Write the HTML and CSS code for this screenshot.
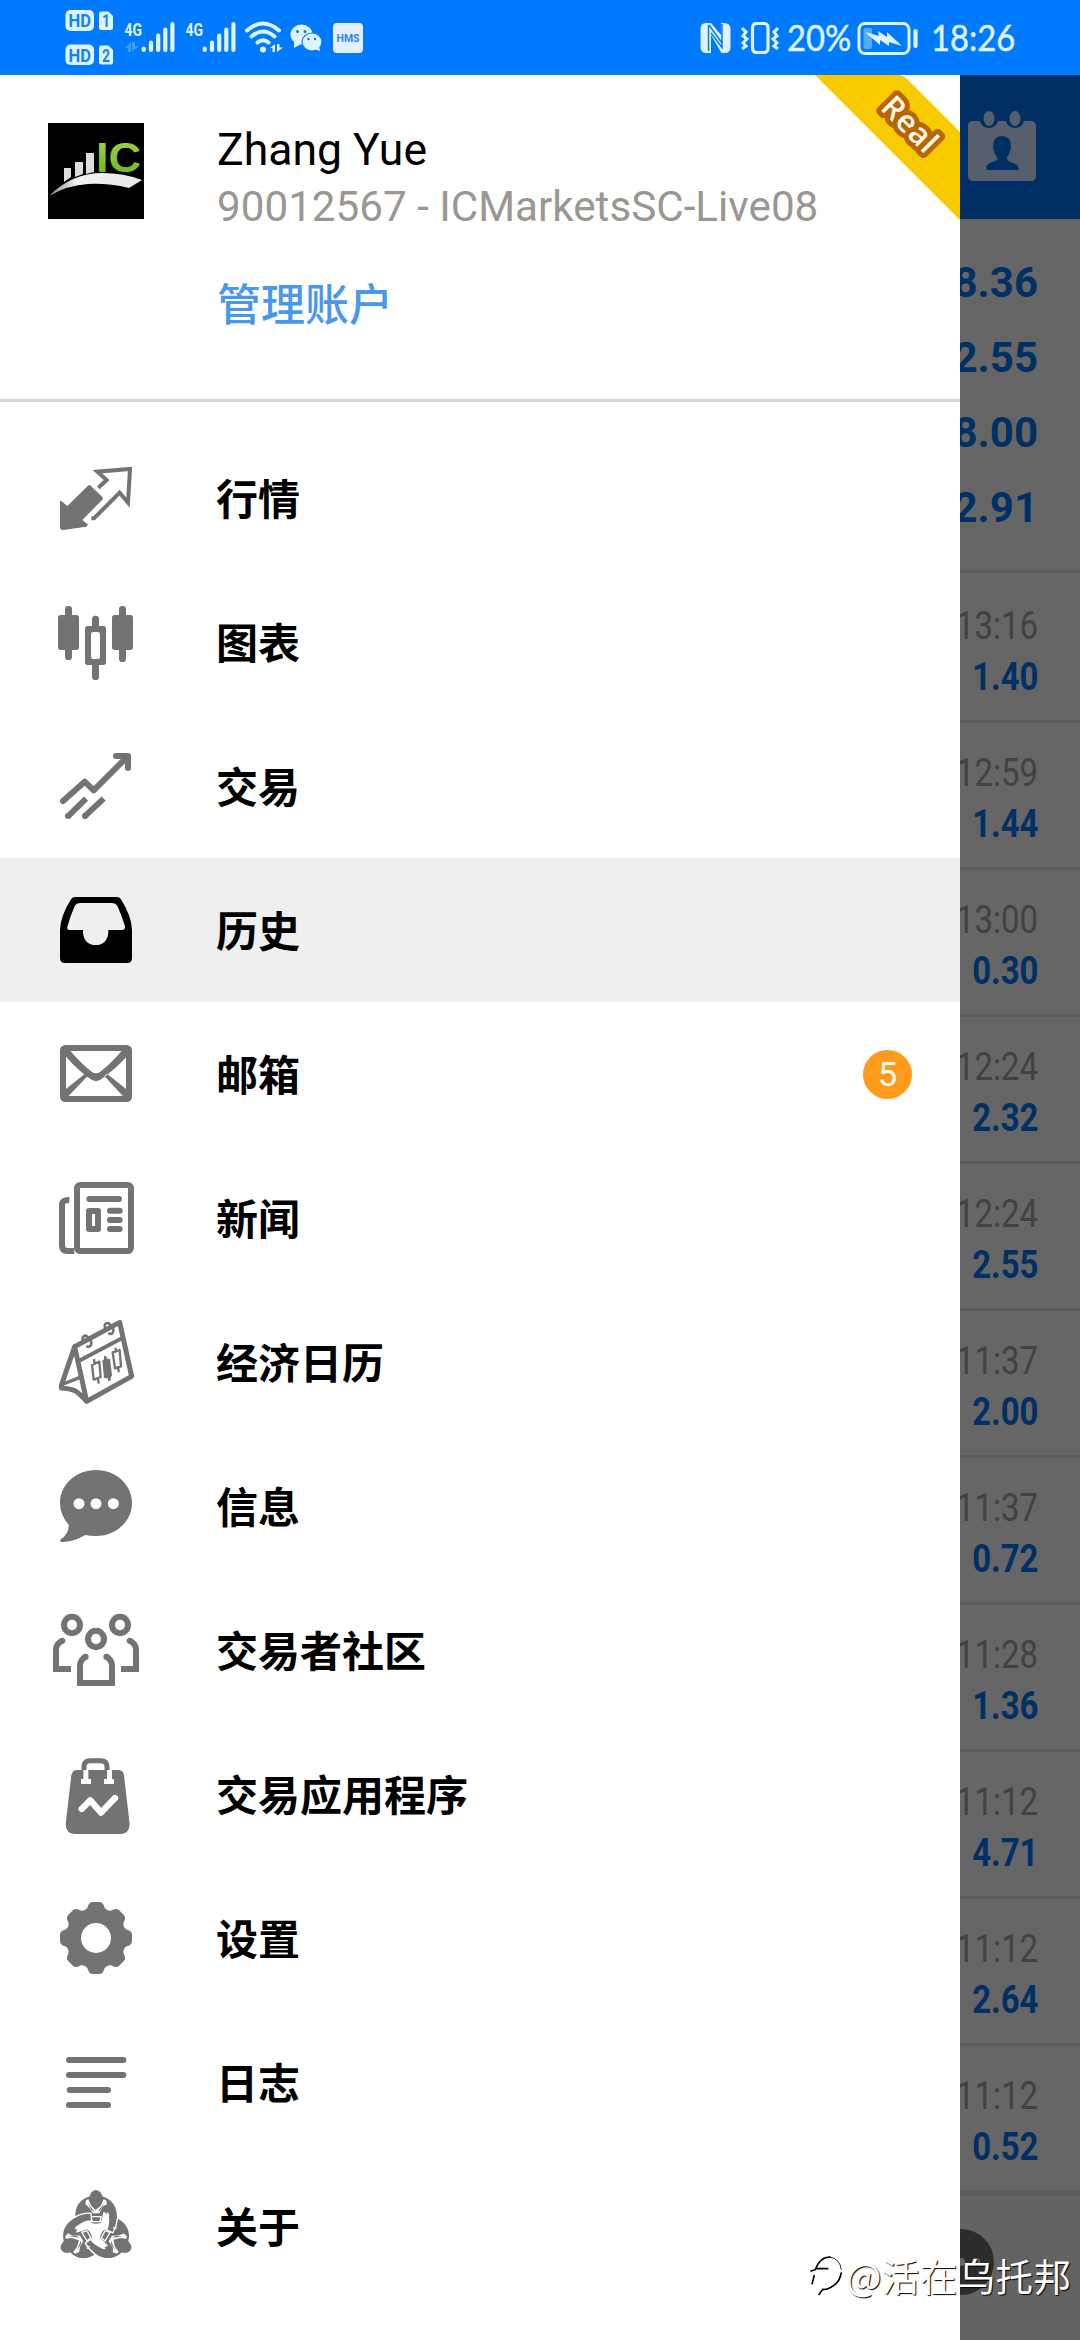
FILE: index.html
```html
<!DOCTYPE html>
<html lang="zh-CN">
<head>
<meta charset="utf-8">
<title>历史</title>
<link rel="stylesheet" href="styles.css">
</head>
<body>
<header class="status">
  <svg class="status-left" viewBox="0 0 380 75">
    <g fill="#dff3ff">
      <rect x="65.5" y="10" width="28.5" height="21" rx="5"/>
      <path d="M101.500 11.500h7l4.500 4.500v12q0 2-2 2h-9.500q-2.500 0-2.500-2V13.500q0-2 2.500-2z"/>
      <rect x="65.500" y="44.500" width="28.500" height="20.500" rx="5"/>
      <path d="M101.500 45.500h7l4.500 4.500v12.500q0 2-2 2h-9.500q-2.500 0-2.500-2V47.500q0-2 2.500-2z"/>
    </g>
    <g class="sim" fill="#1583f2">
      <text x="68.500" y="27" textLength="22.500" lengthAdjust="spacingAndGlyphs">HD</text>
      <text x="102" y="27" textLength="8" lengthAdjust="spacingAndGlyphs">1</text>
      <text x="68.500" y="61.500" textLength="22.500" lengthAdjust="spacingAndGlyphs">HD</text>
      <text x="102" y="61.500" textLength="8" lengthAdjust="spacingAndGlyphs">2</text>
    </g>
    <g class="net" fill="#dff3ff">
      <text x="124.500" y="35.500" textLength="17.500" lengthAdjust="spacingAndGlyphs">4G</text>
      <text x="185.500" y="35.500" textLength="17.500" lengthAdjust="spacingAndGlyphs">4G</text>
    </g>
    <g stroke="#dff3ff" stroke-width="4.200" stroke-linecap="round" fill="none">
      <path d="M143.700 48.500v1.500M151 42.500v7.500M158.200 35.500v14.500M165.300 29.500v20.500M172.400 24v26"/>
      <path d="M204.700 48.500v1.500M212 42.500v7.500M219.200 35.500v14.500M226.300 29.500v20.500M233.400 24v26"/>
      <path d="M247 30.500Q263 16.500 279 30.500M251.500 36.500Q263 26.500 274.500 36.500M257.500 42.500Q263 38 268.500 42.500" stroke-width="4"/>
    </g>
    <g fill="#dff3ff">
      <circle cx="263" cy="49.500" r="3"/>
      <path d="M270 48l5-4v8h-2.500v-4zM277 44v8l6-4.500h-3.500v-3.500z"/>
      <path fill="#3f9cff" d="M125 48l6-6v10h-3v-4zM132 42v10l7-6h-4v-4z"/>
      <ellipse cx="301.500" cy="34.500" rx="11" ry="10"/>
      <path d="M294 41v7l7-4z"/>
      <ellipse cx="312" cy="42" rx="10" ry="9" stroke="#007aff" stroke-width="1.200"/>
      <path d="M319 46l1 5-6-2z"/>
      <rect x="333" y="23" width="30" height="30" rx="4" fill="#e4f0ff"/>
    </g>
    <g fill="#007aff"><circle cx="297.500" cy="31.500" r="1.500"/><circle cx="305" cy="31.500" r="1.500"/><circle cx="308.500" cy="39" r="1.200"/><circle cx="315" cy="39" r="1.200"/></g>
    <text class="hms" x="336.500" y="42" textLength="23" lengthAdjust="spacingAndGlyphs">HMS</text>
  </svg>
  <div class="status-right">
    <svg width="80" height="32" viewBox="700 21 80 32">
      <path fill="#dff3ff" d="M706 22h4v30h-3q-6.500 0-6.500-6V28q0-6 5.500-6zM708 22l3 0 10 12V22h3q6.500 0 6.500 6v18q0 6-6 6h-3L711 34v18h-3z"/>
      <path d="M708.500 24v26M711 32l11 14.500V23M709 24L722 42" fill="none" stroke="#007aff" stroke-width="1.500"/>
      <rect x="752.500" y="22.500" width="15.500" height="29" rx="4" fill="none" stroke="#dff3ff" stroke-width="3.200"/>
      <path d="M742 27l4 4-3 4 4 3-4 4 3 3-4 3M778 27l-4 4 3 4-4 3 4 4-3 3 4 3" fill="none" stroke="#dff3ff" stroke-width="3"/>
    </svg>
    <span class="battery-text">20%</span>
    <svg width="62" height="34" viewBox="858 20 62 34">
      <rect x="860" y="22.500" width="50" height="30" rx="6" fill="none" stroke="#dff3ff" stroke-width="3"/>
      <rect x="864.500" y="27" width="8.500" height="21" rx="2" fill="#54a8ff"/>
      <path fill="#dff3ff" d="M866 31l14 4-1-5 9 6 0-5 15 14-13-4 0 4-9-6 0 5z"/>
      <path d="M916.500 30v15" stroke="#dff3ff" stroke-width="4.200" stroke-linecap="round"/>
    </svg>
    <span class="clock">18:26</span>
  </div>
</header>

<div class="screen">
  <nav class="drawer">
    <section class="account">
      <svg class="avatar" viewBox="0 0 96 96">
        <defs>
          <linearGradient id="green" x2="0" y2="1"><stop stop-color="#a6d64a"/><stop offset="1" stop-color="#6ab023"/></linearGradient>
          <linearGradient id="silver" x2="1" y2="0"><stop stop-color="#888"/><stop offset=".3" stop-color="#f2f2f2"/><stop offset="1" stop-color="#e8e8e8"/></linearGradient>
        </defs>
        <rect width="96" height="96"/>
        <path fill="#ddd" d="M16 45h7v9l-7 5zM27 39h8v12l-8 3zM38 30h8v19l-8 2z"/>
        <text x="48" y="49" class="brand" textLength="45" lengthAdjust="spacingAndGlyphs" fill="url(#green)">IC</text>
        <path fill="url(#silver)" d="M1 73Q24 50 54 50Q76 50 94 57L81 65Q60 60 40 61Q20 62 1 73z"/>
      </svg>
      <div class="who">
        <div class="name">Zhang Yue</div>
        <div class="login">90012567 - ICMarketsSC-Live08</div>
        <a class="manage">管理账户</a>
      </div>
      <svg class="ribbon" viewBox="0 0 145 145">
        <path fill="#f7cb00" d="M0 0H84Q88 0 91 3L145 57V145z"/>
        <text transform="translate(95 49) rotate(45)" x="0" y="11" text-anchor="middle" textLength="65" lengthAdjust="spacing">Real</text>
      </svg>
    </section>
    <ul class="menu">
      <li class="item"><svg class="icon" viewBox="54 30 288 288">
        <path fill="#737373" d="M174 137Q178 133 182 137L217 171Q221 175 217 179L157 240L173 253Q174 258 168 260L100 270Q90 270 90 262V183Q94 182 98 186L112 198z"/>
        <path fill="none" stroke="#737373" stroke-width="12" d="M205 143L230 120L202 95L300 87L294 188L269 158L192 235H184"/></svg><span>行情</span></li>
      <li class="item"><svg class="icon" viewBox="54 462 288 288">
        <g fill="#737373"><rect x="84" y="525" width="63" height="105" rx="8"/><rect x="246" y="525" width="63" height="105" rx="8"/><rect x="105" y="498" width="21" height="162" rx="10"/><rect x="267" y="498" width="21" height="168" rx="10"/><rect x="186" y="527" width="21" height="193" rx="10"/><rect x="165" y="558" width="63" height="117" rx="8"/></g><rect x="183" y="576" width="27" height="81" rx="7" fill="#fff"/></svg><span>图表</span></li>
      <li class="item"><svg class="icon" viewBox="54 894 288 288">
        <g fill="none" stroke="#737373" stroke-width="18" stroke-linejoin="round"><path stroke-linecap="round" d="M99 1083L164 1025L191 1051L292 950M258 948H294V984"/><path d="M113 1130L168 1076M163 1130L221 1076"/></g><g fill="#737373"><circle cx="114" cy="1128" r="9"/><circle cx="165" cy="1128" r="9"/></g></svg><span>交易</span></li>
      <li class="item selected"><svg class="icon" viewBox="54 36 288 288">
        <path fill-rule="evenodd" d="M136 81H260Q268 81 273 88Q305 140 306 180V264Q306 279 291 279H105Q90 279 90 264V180Q91 140 123 88Q128 81 136 81zM152 99Q139 99 134 109Q120 140 112 170Q110 180 120 180H159V188Q163 225 197 225Q231 225 235 188V180H275Q287 180 285 169Q276 138 262 107Q257 99 246 99z"/></svg><span>历史</span></li>
      <li class="item"><svg class="icon" viewBox="54 468 288 288">
        <rect x="99" y="534" width="198" height="153" rx="7" fill="none" stroke="#737373" stroke-width="18"/>
        <path fill="#737373" d="M104 540L121 543Q155 582 186 606Q198 614 210 606Q241 582 275 543L294 540V556Q250 604 210 630Q198 636 186 630Q150 608 106 558zM165 611L173 618L110 684L104 672V660zM231 611L223 618L284 684L292 672V660z"/></svg><span>邮箱</span><b class="badge">5</b></li>
      <li class="item"><svg class="icon" viewBox="54 900 288 288">
        <rect x="141" y="945" width="162" height="198" rx="10" fill="none" stroke="#737373" stroke-width="18"/>
        <path d="M118 990Q96 989 96 1005V1125Q96 1143 112 1143H133" fill="none" stroke="#737373" stroke-width="18"/>
        <path d="M178 987H267M240 1022H269M240 1050H269M240 1077H269" stroke="#737373" stroke-width="18" stroke-linecap="round"/>
        <rect x="177" y="1023" width="27" height="54" fill="none" stroke="#737373" stroke-width="18" stroke-linejoin="round"/></svg><span>新闻</span></li>
      <li class="item"><svg class="icon" viewBox="54 42 288 288">
        <g fill="none" stroke="#737373" stroke-width="15" stroke-linejoin="round" stroke-linecap="round"><path d="M134 140L269 67L305 229L170 304Q145 277 132 271Q120 266 94 264V256L134 140L170 304"/><path d="M152 180L277 114" stroke-width="12"/><path d="M100 252L150 232" stroke-width="10"/>
        <path stroke-width="8" d="M158 121Q156 106 168 107Q174 109 184 126Q185 142 172 140M225 83Q221 69 234 69Q240 70 250 88Q251 104 238 101"/>
        <path stroke-width="7" d="M186 195L208 185L212 231L191 239zM193 180V192M203 236L206 248M248 157L269 150L273 199L255 205zM257 146V155M264 203L266 214"/></g>
        <path fill="#737373" d="M217 182L222 178V168L229 169L231 176L240 177L246 226L242 233L243 241L235 244L233 235L222 234z"/></svg><span>经济日历</span></li>
      <li class="item"><svg class="icon" viewBox="54 474 288 288">
        <path fill="#737373" d="M198 510C258 510 306 554 306 609C306 664 258 708 198 708Q180 708 166 705Q135 724 100 726Q86 726 92 718Q118 700 116 674Q90 645 90 609C90 554 138 510 198 510z"/>
        <g fill="#fff"><circle cx="147" cy="611" r="16.500"/><circle cx="198" cy="611" r="16.500"/><circle cx="250" cy="611" r="16.500"/></g></svg><span>信息</span></li>
      <li class="item"><svg class="icon" viewBox="54 906 288 288">
        <g fill="none" stroke="#737373" stroke-width="18"><ellipse cx="126" cy="975" rx="24" ry="24.500"/><ellipse cx="270" cy="975" rx="24" ry="24.500"/><ellipse cx="198" cy="1017" rx="24" ry="24.500"/><path d="M123 1107H78V1048Q79 1031 97 1022M273 1107H318V1048Q317 1031 299 1022M167 1070Q151 1080 150 1096V1149H246V1096Q245 1080 229 1070"/></g>
        <g fill="#737373"><circle cx="97" cy="1022" r="9"/><circle cx="299" cy="1022" r="9"/><circle cx="167" cy="1070" r="9"/><circle cx="229" cy="1070" r="9"/></g></svg><span>交易者社区</span></li>
      <li class="item"><svg class="icon" viewBox="54 18 288 288">
        <path fill="#737373" d="M142 90H264Q280 90 282 106L299 252Q299 282 269 282H137Q107 282 107 252L124 106Q127 90 142 90z"/>
        <path fill="#fff" d="M160 90H175V117H183V132H153V117H160zM231 90H246V117H252V132H222V117H231z"/>
        <path fill="none" stroke="#737373" stroke-width="15" d="M162 90V80Q162 62 180 62H213Q231 62 231 80V90"/>
        <path d="M155 207L181 181L213 218L255 174" fill="none" stroke="#fff" stroke-width="19" stroke-linecap="round" stroke-linejoin="round"/></svg><span>交易应用程序</span></li>
      <li class="item"><svg class="icon" viewBox="54 450 288 288">
        <defs><path id="tooth" d="M150 530L154 512Q170 513 173 501Q177 486 188 486H208Q219 486 223 501Q226 513 242 512L246 530z"/></defs>
        <g fill="#737373"><circle cx="198" cy="594" r="86"/><use href="#tooth"/><use href="#tooth" transform="rotate(45 198 594)"/><use href="#tooth" transform="rotate(90 198 594)"/><use href="#tooth" transform="rotate(135 198 594)"/><use href="#tooth" transform="rotate(180 198 594)"/><use href="#tooth" transform="rotate(225 198 594)"/><use href="#tooth" transform="rotate(270 198 594)"/><use href="#tooth" transform="rotate(315 198 594)"/></g><circle cx="198" cy="594" r="45" fill="#fff"/></svg><span>设置</span></li>
      <li class="item"><svg class="icon" viewBox="54 -18 288 288"><path d="M117 60H280M117 105H280M119 150H234M117 195H234" stroke="#737373" stroke-width="18" stroke-linecap="round"/></svg><span>日志</span></li>
      <li class="item"><svg class="icon" viewBox="54 414 288 288">
        <defs><g id="member">
          <path fill="#737373" stroke="#fff" stroke-width="4" d="M134 532Q132 480 180 467H216Q263 480 263 534Q263 562 249 582L228 572Q238 556 235 528L222 518L214 550Q198 556 182 550L180 522Q158 522 134 532z"/>
          <path fill="#fff" d="M168 480L175 478L184 497L197 510L212 497L221 478L228 481L231 493L219 499L208 520H189L178 503L166 493z"/>
          <path fill="#737373" d="M173 488L180 498L194 516L184 510zM223 488L216 498L202 516L212 510z"/>
          <ellipse cx="198" cy="476" rx="20" ry="26" fill="#737373"/>
          <path d="M183 530H213L210 545H186z" fill="#737373" stroke="#fff" stroke-width="4"/>
          <path d="M163 519L166 529M232 518L236 528" stroke="#fff" stroke-width="5"/>
        </g></defs>
        <use href="#member"/><use href="#member" transform="rotate(120 198 570)"/><use href="#member" transform="rotate(240 198 570)"/></svg><span>关于</span></li>
    </ul>
  </nav>

  <main class="history">
    <div class="toolbar">
      <svg width="70" height="72" viewBox="0 0 70 72">
        <path fill="#575f6c" d="M5 10H12Q14 17 21 17Q28 17 30 10H38Q40 17 47 17Q54 17 56 10H63Q68 10 68 15V65Q68 70 63 70H5Q0 70 0 65V15Q0 10 5 10z"/>
        <ellipse cx="21" cy="7.500" rx="5.500" ry="7.500" fill="#575f6c"/><ellipse cx="47" cy="7.500" rx="5.500" ry="7.500" fill="#575f6c"/>
        <path fill="#002f64" d="M34 25Q43 25 43 36Q42 43 39 46Q39 50 42 51Q51 53 51 58Q51 59 48 59H20Q18 59 18 56Q19 52 27 50Q30 49 29 46Q26 43 25 36Q25 25 34 25z"/>
      </svg>
    </div>
    <div class="totals"><span>8.36</span><span>2.55</span><span>8.00</span><span class="last">2.91</span></div>
    <ol class="deals">
      <li><time>13:16</time><b>1.40</b></li>
      <li><time>12:59</time><b>1.44</b></li>
      <li><time>13:00</time><b>0.30</b></li>
      <li><time>12:24</time><b>2.32</b></li>
      <li><time>12:24</time><b>2.55</b></li>
      <li><time>11:37</time><b>2.00</b></li>
      <li><time>11:37</time><b>0.72</b></li>
      <li><time>11:28</time><b>1.36</b></li>
      <li><time>11:12</time><b>4.71</b></li>
      <li><time>11:12</time><b>2.64</b></li>
      <li><time>11:12</time><b>0.52</b></li>
    </ol>
    <footer class="bottom"><svg width="36" height="66" viewBox="0 0 36 66"><circle cx="1" cy="33" r="33" fill="#2c2c2c"/><circle cx="1" cy="33" r="4" fill="#666"/><circle cx="16" cy="33" r="4" fill="#666"/></svg></footer>
  </main>
</div>
<div class="watermark">
  <svg width="36" height="42" viewBox="90 545 108 126"><path fill="none" stroke="#000" stroke-width="5" d="M91 597L106 592Q120 553 152 554M106 589H145M103 608L96 636M184 600Q180 628 160 640Q142 654 128 651L116 668"/><path fill="none" stroke="#000" stroke-width="2.500" d="M150 554Q180 560 184 592"/></svg>
  <span>@活在乌托邦</span>
</div>
</body>
</html>
```
FILE: styles.css
```css
* { box-sizing: border-box; }

body {
  margin: 0;
  width: 1080px;
  height: 2340px;
  position: relative;
  overflow: hidden;
  background: #fff;
  font-family: Roboto, "Noto Sans CJK SC", sans-serif;
}

ul, ol { list-style: none; margin: 0; padding: 0; }
svg { display: block; flex: none; }

.status {
  height: 75px;
  display: flex;
  justify-content: space-between;
  background: #007aff;
  color: #dff3ff;
}
.status-left { width: 380px; height: 75px; }
.sim { font: 700 19px Roboto, sans-serif; }
.net { font: 700 19px Roboto, sans-serif; }
.hms { font: 700 11px Roboto, sans-serif; fill: #2f86e8; }
.status-right {
  width: 380px;
  display: flex;
  align-items: center;
  font: 400 36px/77px Lato, sans-serif;
}
.battery-text,
.clock {
  white-space: nowrap;
  transform: scaleX(.91);
  transform-origin: left;
  -webkit-text-stroke: .5px #dff3ff;
}
.battery-text { width: 70px; margin-left: 7px; }
.clock { margin-left: 12px; }

.screen { display: flex; height: 2265px; }
.drawer { width: 960px; background: #fff; }

.account {
  position: relative;
  display: flex;
  gap: 73px;
  height: 327px;
  padding: 48px 0 0 48px;
  border-bottom: 3px solid #d6d6d6;
}
.avatar { width: 96px; height: 96px; }
.brand { font: 700 43px "Liberation Sans", sans-serif; }
.who { display: flex; flex-direction: column; align-items: flex-start; white-space: nowrap; }
.name { font-size: 44.5px; line-height: 54px; color: #000; }
.login { font-size: 42.2px; line-height: 60px; color: #9a9691; }
.manage { margin-top: 39px; font-size: 44px; font-weight: 500; line-height: 60px; color: #4a98ee; }
.ribbon { position: absolute; top: 0; right: 0; width: 145px; height: 145px; }
.ribbon text {
  font: 600 31px "Open Sans", sans-serif;
  fill: #fffdf0;
  stroke: #b96600;
  stroke-width: 10px;
  stroke-linejoin: round;
  paint-order: stroke;
}

.menu { padding-top: 24px; }
.item {
  height: 144px;
  display: flex;
  align-items: center;
  padding: 0 48px;
  font-size: 42px;
  font-weight: 700;
  line-height: 60px;
  color: #000;
}
.item span { padding-top: 6px; }
.item.selected { background: #efefef; }
.icon { width: 96px; height: 96px; margin-right: 72px; }
.badge {
  width: 49px;
  height: 49px;
  margin-left: auto;
  border-radius: 50%;
  background: #ff9b1a;
  color: #fff;
  font-size: 34px;
  font-weight: 400;
  line-height: 49px;
  text-align: center;
}

.history {
  width: 120px;
  display: flex;
  flex-direction: column;
  overflow: hidden;
  background: #666;
}
.toolbar { height: 144px; padding: 36px 0 0 8px; background: #002f64; }
.totals {
  height: 354px;
  padding: 26px 42px 0 0;
  display: flex;
  flex-direction: column;
  align-items: flex-end;
  border-bottom: 3px solid #5c5c5c;
  font-size: 42px;
  font-weight: 700;
  line-height: 75px;
  color: #003064;
}
.deals { padding-top: 3px; }
.deals li {
  height: 147px;
  padding: 25px 42px 0 0;
  display: flex;
  flex-direction: column;
  align-items: flex-end;
  border-bottom: 3px solid #5c5c5c;
  font-size: 39px;
  line-height: 51px;
}
.deals time, .deals b { transform: scaleX(.845); transform-origin: right; }
.deals time { color: #424242; }
.deals b { color: #003064; }
.bottom { flex: 1; padding-top: 33px; border-top: 3px solid #5c5c5c; background: #636363; }

.watermark {
  position: absolute;
  left: 810px;
  top: 2248px;
  display: flex;
  align-items: center;
  color: #fff;
  font: 400 37.5px/54px "Noto Sans CJK SC", sans-serif;
  white-space: nowrap;
  text-shadow: 1px 1px 1px #000;
}
.watermark span { letter-spacing: .4px; }
```
